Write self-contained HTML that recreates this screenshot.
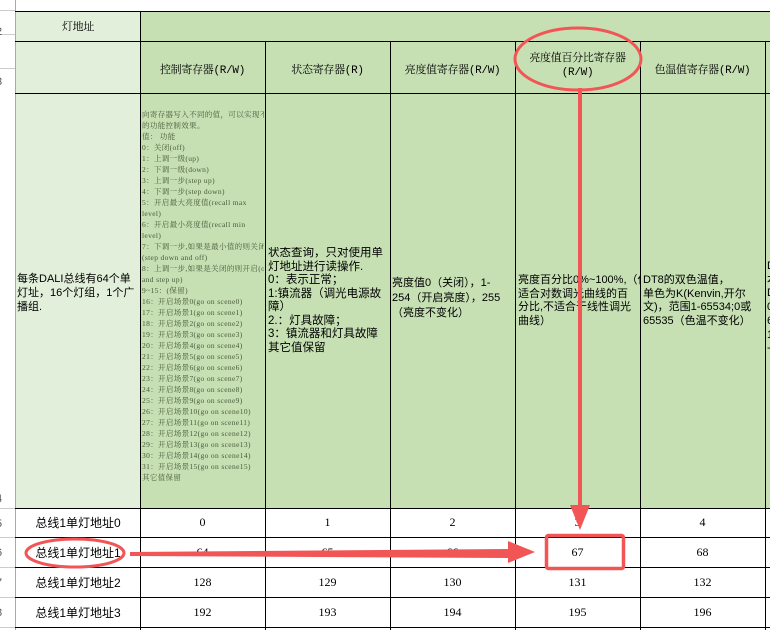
<!DOCTYPE html>
<html><head><meta charset="utf-8"><style>
body{margin:0;width:770px;height:630px;overflow:hidden;background:#fff;position:relative;font-family:"Liberation Serif","Noto Serif CJK SC","Noto Sans CJK SC",serif;color:#000}
.c{position:absolute;box-sizing:border-box}
.hl{position:absolute;height:1px;background:#000}
.vl{position:absolute;width:1px;background:#000}
.t{position:absolute;font-size:12px;white-space:nowrap}
.h{font-size:11px;font-family:"Liberation Mono","Noto Serif CJK SC",serif;letter-spacing:-0.3px}
.ctr{display:flex;align-items:center;justify-content:center;text-align:center}
.rn{position:absolute;left:-4px;font-size:11px;color:#555;font-family:"Liberation Sans",sans-serif}
.ctl{position:absolute;left:142px;top:109px;font-size:7.5px;line-height:11px;color:#4a5a3a;white-space:nowrap;letter-spacing:0.35px;width:122px;overflow:hidden}
.tx{position:absolute;font-size:11.5px;line-height:14px;font-family:"Liberation Sans","Noto Sans CJK SC",sans-serif;white-space:nowrap;overflow:hidden;width:122px}
</style></head><body>
<div class="c" style="left:16px;top:11px;width:124px;height:497px;background:#e2efda"></div>
<div class="c" style="left:140px;top:11px;width:630px;height:497px;background:#c6e0b4"></div>
<div class="c" style="left:15px;top:0;width:1px;height:630px;background:#aaa"></div>
<div class="c" style="left:0;top:10px;width:15px;height:1px;background:#ccc"></div>
<div class="c" style="left:0;top:34px;width:15px;height:1px;background:#ccc"></div>
<div class="c" style="left:0;top:68px;width:15px;height:1px;background:#ccc"></div>
<div class="c" style="left:0;top:508px;width:15px;height:1px;background:#ccc"></div>
<div class="c" style="left:0;top:537px;width:15px;height:1px;background:#ccc"></div>
<div class="c" style="left:0;top:567px;width:15px;height:1px;background:#ccc"></div>
<div class="c" style="left:0;top:597px;width:15px;height:1px;background:#ccc"></div>
<div class="c" style="left:0;top:627px;width:15px;height:1px;background:#ccc"></div>
<div class="rn" style="top:26px">2</div><div class="rn" style="top:76px">3</div><div class="rn" style="top:493px">4</div><div class="rn" style="top:518px">5</div><div class="rn" style="top:547px">6</div><div class="rn" style="top:577px">7</div><div class="rn" style="top:607px">8</div>
<div class="hl" style="left:15px;top:11px;width:755px"></div>
<div class="hl" style="left:15px;top:41px;width:755px"></div>
<div class="hl" style="left:15px;top:93px;width:755px"></div>
<div class="hl" style="left:15px;top:508px;width:755px"></div>
<div class="hl" style="left:15px;top:537px;width:755px"></div>
<div class="hl" style="left:15px;top:567px;width:755px"></div>
<div class="hl" style="left:15px;top:597px;width:755px"></div>
<div class="hl" style="left:15px;top:627px;width:755px"></div>
<div class="vl" style="left:140px;top:11px;height:619px"></div>
<div class="vl" style="left:265px;top:41px;height:589px"></div>
<div class="vl" style="left:390px;top:41px;height:589px"></div>
<div class="vl" style="left:515px;top:41px;height:589px"></div>
<div class="vl" style="left:640px;top:41px;height:589px"></div>
<div class="vl" style="left:765px;top:41px;height:589px"></div>
<div class="t ctr h" style="left:16px;top:11px;width:124px;height:30px">灯地址</div>
<div class="t ctr h" style="left:140px;top:49px;width:125px;height:40px">控制寄存器(R/W)</div>
<div class="t ctr h" style="left:265px;top:49px;width:125px;height:40px">状态寄存器(R)</div>
<div class="t ctr h" style="left:390px;top:49px;width:125px;height:40px">亮度值寄存器(R/W)</div>
<div class="t ctr h" style="left:515px;top:51px;width:125px;height:30px;line-height:14px">亮度值百分比寄存器<br>(R/W)</div>
<div class="t ctr h" style="left:640px;top:49px;width:125px;height:40px">色温值寄存器(R/W)</div>
<div class="tx" style="left:17px;top:272px;font-size:11px;width:122px">每条DALI总线有64个单<br>灯址，16个灯组，1个广<br>播组.</div>
<div class="ctl">向寄存器写入不同的值，可以实现不同<br>的功能控制效果。<br>值： 功能<br>0：关闭(off)<br>1：上调一级(up)<br>2：下调一级(down)<br>3：上调一步(step up)<br>4：下调一步(step down)<br>5：开启最大亮度值(recall max<br>level)<br>6：开启最小亮度值(recall min<br>level)<br>7：下调一步,如果是最小值的则关闭<br>(step down and off)<br>8：上调一步,如果是关闭的则开启(on<br>and step up)<br>9~15：(保留)<br>16：开启场景0(go on scene0)<br>17：开启场景1(go on scene1)<br>18：开启场景2(go on scene2)<br>19：开启场景3(go on scene3)<br>20：开启场景4(go on scene4)<br>21：开启场景5(go on scene5)<br>22：开启场景6(go on scene6)<br>23：开启场景7(go on scene7)<br>24：开启场景8(go on scene8)<br>25：开启场景9(go on scene9)<br>26：开启场景10(go on scene10)<br>27：开启场景11(go on scene11)<br>28：开启场景12(go on scene12)<br>29：开启场景13(go on scene13)<br>30：开启场景14(go on scene14)<br>31：开启场景15(go on scene15)<br>其它值保留</div>
<div class="tx" style="left:268px;top:247px;line-height:13.5px">状态查询，只对使用单<br>灯地址进行读操作.<br>0：表示正常；<br>1:镇流器（调光电源故<br>障）<br>2.：灯具故障；<br>3：镇流器和灯具故障<br>其它值保留</div>
<div class="tx" style="left:392px;top:276px;line-height:15px;font-size:11px">亮度值0（关闭），1-<br>254（开启亮度），255<br>（亮度不变化）</div>
<div class="tx" style="left:518px;top:274px;line-height:13.7px;font-size:11px">亮度百分比0%~100%,（仅<br>适合对数调光曲线的百<br>分比,不适合于线性调光<br>曲线）</div>
<div class="tx" style="left:643px;top:274px;line-height:13.7px;font-size:11px">DT8的双色温值，<br>单色为K(Kenvin,开尔<br>文)，范围1-65534;0或<br>65535（色温不变化）</div>
<div class="tx" style="left:767px;top:260px;line-height:13.7px;font-size:11px">D<br>本<br>D<br>0<br>6<br>1<br>-</div>
<div class="t ctr" style="left:16px;top:508px;width:124px;height:29px;font-family:'Liberation Sans','Noto Sans CJK SC',sans-serif">总线1单灯地址0</div>
<div class="t ctr" style="left:16px;top:538px;width:124px;height:29px;font-family:'Liberation Sans','Noto Sans CJK SC',sans-serif">总线1单灯地址1</div>
<div class="t ctr" style="left:16px;top:568px;width:124px;height:29px;font-family:'Liberation Sans','Noto Sans CJK SC',sans-serif">总线1单灯地址2</div>
<div class="t ctr" style="left:16px;top:598px;width:124px;height:29px;font-family:'Liberation Sans','Noto Sans CJK SC',sans-serif">总线1单灯地址3</div>
<div class="t ctr" style="left:140px;top:508px;width:125px;height:29px">0</div><div class="t ctr" style="left:265px;top:508px;width:125px;height:29px">1</div><div class="t ctr" style="left:390px;top:508px;width:125px;height:29px">2</div><div class="t ctr" style="left:515px;top:508px;width:125px;height:29px">3</div><div class="t ctr" style="left:640px;top:508px;width:125px;height:29px">4</div>
<div class="t ctr" style="left:140px;top:538px;width:125px;height:29px">64</div><div class="t ctr" style="left:265px;top:538px;width:125px;height:29px">65</div><div class="t ctr" style="left:390px;top:538px;width:125px;height:29px">66</div><div class="t ctr" style="left:515px;top:538px;width:125px;height:29px">67</div><div class="t ctr" style="left:640px;top:538px;width:125px;height:29px">68</div>
<div class="t ctr" style="left:140px;top:568px;width:125px;height:29px">128</div><div class="t ctr" style="left:265px;top:568px;width:125px;height:29px">129</div><div class="t ctr" style="left:390px;top:568px;width:125px;height:29px">130</div><div class="t ctr" style="left:515px;top:568px;width:125px;height:29px">131</div><div class="t ctr" style="left:640px;top:568px;width:125px;height:29px">132</div>
<div class="t ctr" style="left:140px;top:598px;width:125px;height:29px">192</div><div class="t ctr" style="left:265px;top:598px;width:125px;height:29px">193</div><div class="t ctr" style="left:390px;top:598px;width:125px;height:29px">194</div><div class="t ctr" style="left:515px;top:598px;width:125px;height:29px">195</div><div class="t ctr" style="left:640px;top:598px;width:125px;height:29px">196</div>
<svg style="position:absolute;left:0;top:0" width="770" height="630">
<g stroke="#f25555" fill="none" stroke-width="3">
<ellipse cx="578" cy="59" rx="63" ry="31"/>
<ellipse cx="75" cy="553" rx="49" ry="14"/>
<rect x="546.5" y="535.5" width="77" height="33" rx="2" stroke-width="3.5"/>
</g>
<g fill="#f25555">
<rect x="578" y="88" width="4" height="418"/>
<polygon points="570,505 590,505 580,530"/>
<polygon points="130,556 130,552 508,549 508,541 535,552 508,563 508,558"/>
</g>
</svg>
</body></html>
